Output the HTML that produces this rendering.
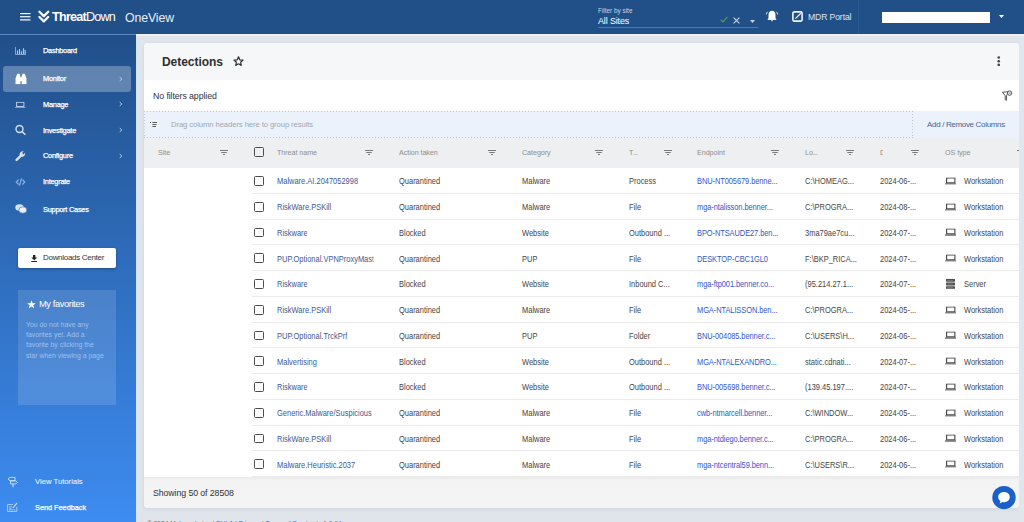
<!DOCTYPE html>
<html><head><meta charset="utf-8">
<style>
*{box-sizing:border-box;margin:0;padding:0}
html,body{width:1024px;height:522px;overflow:hidden}
body{font-family:"Liberation Sans",sans-serif;background:#dfe5eb;position:relative;color:#333}
.abs{position:absolute}
#top{position:absolute;left:0;top:0;width:1024px;height:34px;background:#214f87}
#side{position:absolute;left:0;top:34px;width:136px;height:488px;background:linear-gradient(180deg,#214f89 0%,#2f6dbd 48%,#3d8cf1 100%);border-top:1px solid #5a88c4}
.nav{position:absolute;left:0;width:136px;height:26px;color:#fff;font-size:7.4px;font-weight:normal;letter-spacing:-0.25px;-webkit-text-stroke:0.25px #fff}
.nav .t{position:absolute;left:43px;top:50%;transform:translateY(-50%);white-space:nowrap}
.nav .ic{position:absolute;left:15px;top:calc(50% + 0.8px);transform:translateY(-50%);line-height:0}
.nav .chev{position:absolute;left:119px;top:calc(50% + 0.5px);transform:translateY(-50%);line-height:0}
#card{position:absolute;left:144px;top:43px;width:875px;height:465px;background:#fff;border-radius:4px;overflow:hidden;box-shadow:0 1px 4px rgba(0,0,0,0.07)}
#chead{position:absolute;left:0;top:0;width:875px;height:36.6px;background:#f5f7f9}
.row{position:absolute;left:0;width:875px;height:25.75px}
.row::after{content:"";position:absolute;left:108px;right:0;bottom:0;height:1px;background:#ebebeb}
.c{position:absolute;top:calc(50% + 0.4px);transform:translateY(-50%) scaleX(0.87);transform-origin:0 50%;font-size:8.6px;color:#444;white-space:nowrap;letter-spacing:0;margin-left:-144px}
.link1{color:#3d5991}
.link2{color:#3157cc;letter-spacing:-0.1px}
.cb{position:absolute;top:8px;width:9.8px;height:9.8px;border:1.5px solid #4d4d4d;border-radius:1.5px;margin-left:-144px}
.os{position:absolute;top:50%;transform:translateY(-50%);margin-left:-144px;line-height:0}
.h{position:absolute;top:151.7px;transform:translateY(-50%);font-size:7.2px;color:#8e8e8e;white-space:nowrap;letter-spacing:-0.07px;margin-left:-144px}
.hf{position:absolute;top:149.9px;margin-left:-144px;line-height:0}
.fi{fill:#7a7a7a}
</style></head>
<body>
<div id="top">
  <!-- hamburger -->
  <svg class="abs" style="left:20px;top:13px" width="10.5" height="7.5" viewBox="0 0 10.5 7.5"><rect y="0" width="10.5" height="1.2" fill="#fff"/><rect y="3.15" width="10.5" height="1.2" fill="#fff"/><rect y="6.3" width="10.5" height="1.2" fill="#fff"/></svg>
  <!-- logo mark -->
  <svg class="abs" style="left:37px;top:9px" width="14" height="15" viewBox="0 0 14 15"><path d="M2.4 2.7 L6.8 7.1 L11.2 2.7" stroke="#fff" stroke-width="2.3" stroke-linecap="round" stroke-linejoin="round" fill="none"/><path d="M2.4 8 L6.8 12.4 L11.2 8" stroke="#fff" stroke-width="2.3" stroke-linecap="round" stroke-linejoin="round" fill="none"/></svg>
  <div class="abs" style="left:52px;top:10px;font-size:12.6px;color:#fff;white-space:nowrap"><b style="letter-spacing:-0.75px">Threat</b><span style="letter-spacing:-0.8px">Down</span></div>
  <div class="abs" style="left:125px;top:11px;font-size:12.3px;color:#e6eefa;letter-spacing:-0.1px;white-space:nowrap">OneView</div>

  <div class="abs" style="left:598px;top:6.7px;font-size:6.4px;color:#c9d6e8;white-space:nowrap">Filter by site</div>
  <div class="abs" style="left:598px;top:15.7px;font-size:9px;color:#fff;white-space:nowrap;letter-spacing:-0.15px">All Sites</div>
  <div class="abs" style="left:598px;top:26.5px;width:160px;height:1.3px;background:#4f77ad"></div>
  <svg class="abs" style="left:720px;top:16px" width="8" height="7" viewBox="0 0 8 7"><path d="M0.6 3.6 L3 6 L7.4 0.8" stroke="#5e9e4e" stroke-width="1.1" fill="none"/></svg>
  <svg class="abs" style="left:733px;top:16.5px" width="7" height="7" viewBox="0 0 7 7"><path d="M0.6 0.6 L6.4 6.4 M6.4 0.6 L0.6 6.4" stroke="#c8d4e6" stroke-width="1.1" fill="none"/></svg>
  <svg class="abs" style="left:750px;top:20px" width="5" height="3" viewBox="0 0 5 3"><path d="M0 0 L5 0 L2.5 3 Z" fill="#c8d4e6"/></svg>
  <!-- bell -->
  <svg class="abs" style="left:764.5px;top:9px" width="14" height="14" viewBox="0 0 14 14"><path d="M7 1.8 C4.6 1.8 3.5 3.7 3.5 5.9 L3.5 9.2 L2.4 11.1 L11.6 11.1 L10.5 9.2 L10.5 5.9 C10.5 3.7 9.4 1.8 7 1.8 Z" fill="#fff"/><rect x="6.2" y="11.1" width="1.6" height="1.1" fill="#e8eef8"/><path d="M2.6 2.8 C1.8 3.6 1.4 4.5 1.3 5.5 M11.4 2.8 C12.2 3.6 12.6 4.5 12.7 5.5" stroke="#dfe8f5" stroke-width="1" fill="none"/></svg>
  <!-- mdr icon -->
  <svg class="abs" style="left:791.5px;top:11px" width="11" height="11" viewBox="0 0 11 11"><rect x="0.9" y="0.9" width="9.2" height="9.2" rx="1.3" stroke="#f2f6fc" stroke-width="1.6" fill="none"/><path d="M3.4 7.6 L8.8 2.2" stroke="#e6edf7" stroke-width="1.3" fill="none"/></svg>
  <div class="abs" style="left:808px;top:11.5px;font-size:8.6px;color:#dde6f2;white-space:nowrap;letter-spacing:-0.1px">MDR Portal</div>
  <div class="abs" style="left:858px;top:0;width:1px;height:34px;background:#2a5991"></div>
  <div class="abs" style="left:882px;top:12px;width:108px;height:11px;background:#fff"></div>
  <svg class="abs" style="left:999px;top:15px" width="5" height="3" viewBox="0 0 5 3"><path d="M0 0 L5 0 L2.5 3 Z" fill="#fff"/></svg>
</div>

<div id="side">
  <div class="nav" style="top:2.2px"><span class="ic"><svg width="11" height="8" viewBox="0 0 11 8"><path d="M0.5 0 L0.5 7.5 L11 7.5" stroke="#9bb8e0" stroke-width="0.8" fill="none"/><path d="M2.5 7 L2.5 3.5 M4.5 7 L4.5 2 M6.5 7 L6.5 4.2 M8.5 7 L8.5 1.2 M10.2 7 L10.2 3" stroke="#a9c3e8" stroke-width="1.2"/></svg></span><span class="t">Dashboard</span></div>
  <div class="abs" style="left:2.8px;top:31.2px;width:128.2px;height:25.8px;background:rgba(255,255,255,0.28);border-radius:3px"></div>
  <div class="nav" style="top:30.1px"><span class="ic"><svg width="12" height="11.5" viewBox="0 0 12 11.5"><path d="M0.6 5 L2.2 0.8 Q2.6 0.2 3.3 0.3 L4.6 0.5 L5.3 3 L5.3 11 L0.5 11 Z" fill="#fff"/><path d="M11.4 5 L9.8 0.8 Q9.4 0.2 8.7 0.3 L7.4 0.5 L6.7 3 L6.7 11 L11.5 11 Z" fill="#fff"/><rect x="5" y="4" width="2" height="4" fill="#fff"/></svg></span><span class="t">Monitor</span><span class="chev"><svg width="3.5" height="5" viewBox="0 0 3.5 5"><path d="M0.6 0.5 L2.8 2.5 L0.6 4.5" stroke="#c9d8ee" stroke-width="0.9" fill="none"/></svg></span></div>
  <div class="nav" style="top:55.8px"><span class="ic"><svg width="10.5" height="6.5" viewBox="0 0 10.5 6.5"><rect x="1.6" y="0.5" width="7.3" height="4.3" stroke="#c7d7ee" stroke-width="0.9" fill="none"/><rect x="0" y="5.5" width="10.5" height="1" fill="#c7d7ee"/></svg></span><span class="t">Manage</span><span class="chev"><svg width="3.5" height="5" viewBox="0 0 3.5 5"><path d="M0.6 0.5 L2.8 2.5 L0.6 4.5" stroke="#c9d8ee" stroke-width="0.9" fill="none"/></svg></span></div>
  <div class="nav" style="top:81.6px"><span class="ic"><svg width="11" height="11" viewBox="0 0 11 11"><circle cx="4.5" cy="4.5" r="3.5" stroke="#d5e2f3" stroke-width="1.4" fill="none"/><path d="M7 7 L10.3 10.3" stroke="#d5e2f3" stroke-width="1.6"/></svg></span><span class="t">Investigate</span><span class="chev"><svg width="3.5" height="5" viewBox="0 0 3.5 5"><path d="M0.6 0.5 L2.8 2.5 L0.6 4.5" stroke="#c9d8ee" stroke-width="0.9" fill="none"/></svg></span></div>
  <div class="nav" style="top:107px"><span class="ic"><svg width="11" height="11" viewBox="0 0 11 11"><path d="M1.6 9.4 L5.4 5.6" stroke="#d5e2f3" stroke-width="2.4" stroke-linecap="round"/><path d="M4.6 4.8 C4.2 2.4 6.2 0.4 8.7 0.9 L7.1 2.6 L8.4 3.9 L10.1 2.3 C10.6 4.8 8.6 6.8 6.2 6.4 Z" fill="#d5e2f3"/></svg></span><span class="t">Configure</span><span class="chev"><svg width="3.5" height="5" viewBox="0 0 3.5 5"><path d="M0.6 0.5 L2.8 2.5 L0.6 4.5" stroke="#c9d8ee" stroke-width="0.9" fill="none"/></svg></span></div>
  <div class="nav" style="top:132.8px"><span class="ic"><svg width="11" height="9" viewBox="0 0 11 9"><path d="M3.6 2.2 L1.3 4.6 L3.6 7 M7.4 2.2 L9.7 4.6 L7.4 7" stroke="#8ab5ec" stroke-width="1.2" fill="none"/><path d="M6.6 0.8 L4.4 8.2" stroke="#8ab5ec" stroke-width="1.2"/></svg></span><span class="t">Integrate</span></div>
  <div class="nav" style="top:160.7px"><span class="ic"><svg width="12" height="10" viewBox="0 0 12 10"><ellipse cx="4.5" cy="3.5" rx="4.2" ry="3.2" fill="#d5e2f3"/><ellipse cx="7.8" cy="6" rx="4" ry="3.2" fill="#e8eff8" stroke="#3a6ab0" stroke-width="0.6"/></svg></span><span class="t">Support Cases</span></div>

  <div class="abs" style="left:18px;top:213.3px;width:98px;height:19.5px;background:#fff;border-radius:2px;box-shadow:0 1px 3px rgba(0,0,0,0.3)">
    <svg class="abs" style="left:13px;top:6.5px" width="6.4" height="7" viewBox="0 0 6.4 7"><path d="M2 0 L4.4 0 L4.4 2.6 L6.1 2.6 L3.2 5.3 L0.3 2.6 L2 2.6 Z" fill="#222"/><rect x="0.3" y="6" width="5.8" height="1" fill="#222"/></svg>
    <div class="abs" style="left:25px;top:5px;font-size:8px;color:#333;white-space:nowrap;letter-spacing:-0.3px">Downloads Center</div>
  </div>

  <div class="abs" style="left:18px;top:255px;width:98px;height:115px;background:rgba(255,255,255,0.13)">
    <svg class="abs" style="left:9px;top:10px" width="9" height="8.5" viewBox="0 0 10 9"><path d="M5 0 L6.2 3.3 L9.8 3.4 L7 5.6 L8 9 L5 7 L2 9 L3 5.6 L0.2 3.4 L3.8 3.3 Z" fill="#fff"/></svg>
    <div class="abs" style="left:21px;top:9px;font-size:9.3px;color:#fff;white-space:nowrap;letter-spacing:-0.4px">My favorites</div>
    <div class="abs" style="left:8px;top:30px;width:95px;font-size:6.9px;line-height:10.2px;color:#9fc0ea;white-space:nowrap">You do not have any<br>favorites yet. Add a<br>favorite by clicking the<br>star when viewing a page</div>
  </div>

  <div class="nav" style="top:433.1px;font-weight:normal"><span class="ic" style="left:7px"><svg width="11" height="11" viewBox="0 0 11 11"><path d="M1 2.6 L3 0.8 L8 0.8 L8 4.2 L3 4.2 Z" stroke="#d5e2f3" stroke-width="0.9" fill="none"/><path d="M3.5 4.4 L8.8 4.4 L10.3 5.9 L8.8 7.4 L3.5 7.4 Z" stroke="#d5e2f3" stroke-width="0.9" fill="none"/><path d="M6 7.4 L6 10.8" stroke="#d5e2f3" stroke-width="1"/></svg></span><span class="t" style="left:35px;font-size:7.7px;letter-spacing:0;color:#e6eefa;-webkit-text-stroke:0.1px #e6eefa">View Tutorials</span></div>
  <div class="nav" style="top:458.6px;"><span class="ic" style="left:7px"><svg width="10.5" height="10" viewBox="0 0 10.5 10"><path d="M6 2.5 L0.6 2.5 L0.6 9.4 L9.8 9.4 L9.8 5" stroke="#b8cdea" stroke-width="0.9" fill="none"/><path d="M2 4.8 L5 4.8 M2 6.3 L4.5 6.3 M2 7.8 L8.5 7.8" stroke="#b8cdea" stroke-width="0.8"/><path d="M5.8 6 L10 1.2" stroke="#d5e2f3" stroke-width="1.1"/></svg></span><span class="t" style="left:35px;letter-spacing:-0.05px">Send Feedback</span></div>
</div>

<div id="card">
  <div id="chead"></div>
  <div class="abs" style="left:18px;top:11.8px;font-size:12px;font-weight:bold;color:#303030;white-space:nowrap;letter-spacing:-0.05px">Detections</div>
  <svg class="abs" style="left:89.3px;top:13.3px" width="11" height="11" viewBox="0 0 11 11"><path d="M5.50 0.85 L6.81 3.79 L10.02 4.13 L7.62 6.29 L8.29 9.44 L5.50 7.83 L2.71 9.44 L3.38 6.29 L0.98 4.13 L4.19 3.79 Z" stroke="#333" stroke-width="1.2" fill="none" stroke-linejoin="round"/></svg>
  <svg class="abs" style="left:853px;top:13px" width="3.5" height="10" viewBox="0 0 3.5 10"><circle cx="1.75" cy="1.5" r="1.3" fill="#444"/><circle cx="1.75" cy="5.2" r="1.3" fill="#444"/><circle cx="1.75" cy="8.9" r="1.3" fill="#444"/></svg>

  <div class="abs" style="left:9px;top:48px;font-size:8.8px;color:#333;white-space:nowrap;letter-spacing:-0.1px">No filters applied</div>
  <svg class="abs" style="left:858px;top:47px" width="12" height="12" viewBox="0 0 12 12"><path d="M0.5 2.2 L6.2 1.8 L4.6 5.6 L4.4 10.4 L3.2 9.6 L3.2 5.8 Z" stroke="#555" stroke-width="1" fill="none" stroke-linejoin="round"/><circle cx="7.6" cy="3.1" r="2.2" stroke="#555" stroke-width="1" fill="#fff"/><path d="M6.8 2.3 L8.4 3.9 M8.4 2.3 L6.8 3.9" stroke="#666" stroke-width="0.7"/></svg>

  <div class="abs" style="left:0;top:68px;width:875px;height:26.6px;background:#ebf2fb"></div>
  <div class="abs" style="left:0;top:68px;width:768.5px;height:1px;background:repeating-linear-gradient(90deg,#bcc5d2 0 1.5px,transparent 1.5px 3px)"></div><div class="abs" style="left:0;top:93.6px;width:768.5px;height:1px;background:repeating-linear-gradient(90deg,#bcc5d2 0 1.5px,transparent 1.5px 3px)"></div><div class="abs" style="left:0;top:68px;width:1px;height:26.6px;background:repeating-linear-gradient(180deg,#c3cbd6 0 1.5px,transparent 1.5px 3px)"></div><div class="abs" style="left:767.5px;top:68px;width:1px;height:26.6px;background:repeating-linear-gradient(180deg,#bcc5d2 0 1.5px,transparent 1.5px 3px)"></div>
  <svg class="abs" style="left:6px;top:79px" width="8" height="6" viewBox="0 0 8 6"><g fill="#5a5a5a"><rect x="0" y="0" width="1" height="1"/><rect x="2" y="0" width="1" height="1" opacity="0.6"/><rect x="2" y="2" width="1" height="1" opacity="0.6"/><rect x="2" y="4" width="1" height="1" opacity="0.6"/><rect x="3" y="0" width="4" height="1"/><rect x="3" y="2" width="3.5" height="1"/><rect x="3" y="4" width="3" height="1"/></g></svg>
  <div class="abs" style="left:27px;top:76.7px;font-size:7.7px;color:#a0a8b2;white-space:nowrap;letter-spacing:-0.1px">Drag column headers here to group results</div>
  <div class="abs" style="left:783px;top:76.5px;font-size:8px;color:#4a6290;white-space:nowrap;letter-spacing:-0.33px">Add / Remove Columns</div>

  <div class="abs" style="left:0;top:94.6px;width:875px;height:30.6px;background:#eeeff1"></div>
</div>
<div id="rows" class="abs" style="left:144px;top:0;width:875px;height:522px;overflow:visible">
<div class="cb" style="left:254px;top:147px"></div>
<span class="h" style="left:158px">Site</span>
<span class="hf" style="left:220px"><svg class="fi" width="8" height="5" viewBox="0 0 8 5"><rect x="0" y="0" width="8" height="1"/><rect x="1.25" y="2" width="5.5" height="1"/><rect x="3" y="4" width="2" height="1"/></svg></span>
<span class="h" style="left:277px">Threat name</span>
<span class="hf" style="left:365px"><svg class="fi" width="8" height="5" viewBox="0 0 8 5"><rect x="0" y="0" width="8" height="1"/><rect x="1.25" y="2" width="5.5" height="1"/><rect x="3" y="4" width="2" height="1"/></svg></span>
<span class="h" style="left:399px">Action taken</span>
<span class="hf" style="left:488px"><svg class="fi" width="8" height="5" viewBox="0 0 8 5"><rect x="0" y="0" width="8" height="1"/><rect x="1.25" y="2" width="5.5" height="1"/><rect x="3" y="4" width="2" height="1"/></svg></span>
<span class="h" style="left:522px">Category</span>
<span class="hf" style="left:595px"><svg class="fi" width="8" height="5" viewBox="0 0 8 5"><rect x="0" y="0" width="8" height="1"/><rect x="1.25" y="2" width="5.5" height="1"/><rect x="3" y="4" width="2" height="1"/></svg></span>
<span class="h" style="left:629px">T<span style="letter-spacing:-0.6px">...</span></span>
<span class="hf" style="left:664px"><svg class="fi" width="8" height="5" viewBox="0 0 8 5"><rect x="0" y="0" width="8" height="1"/><rect x="1.25" y="2" width="5.5" height="1"/><rect x="3" y="4" width="2" height="1"/></svg></span>
<span class="h" style="left:697px">Endpoint</span>
<span class="hf" style="left:771px"><svg class="fi" width="8" height="5" viewBox="0 0 8 5"><rect x="0" y="0" width="8" height="1"/><rect x="1.25" y="2" width="5.5" height="1"/><rect x="3" y="4" width="2" height="1"/></svg></span>
<span class="h" style="left:805px">Lo<span style="letter-spacing:-0.6px">...</span></span>
<span class="hf" style="left:846px"><svg class="fi" width="8" height="5" viewBox="0 0 8 5"><rect x="0" y="0" width="8" height="1"/><rect x="1.25" y="2" width="5.5" height="1"/><rect x="3" y="4" width="2" height="1"/></svg></span>
<span class="h" style="left:880px"><span style="display:inline-block;width:3px;overflow:hidden;vertical-align:top">D</span></span>
<span class="hf" style="left:911px"><svg class="fi" width="8" height="5" viewBox="0 0 8 5"><rect x="0" y="0" width="8" height="1"/><rect x="1.25" y="2" width="5.5" height="1"/><rect x="3" y="4" width="2" height="1"/></svg></span>
<span class="h" style="left:945px">OS type</span>
<div class="row" style="top:168.00px">
<div class="cb" style="left:254px"></div>
<span class="c link1" style="left:277px;max-width:111px;overflow:hidden">Malware.AI.2047052998</span>
<span class="c" style="left:399px">Quarantined</span>
<span class="c" style="left:522px">Malware</span>
<span class="c" style="left:629px">Process</span>
<span class="c link2" style="left:697px">BNU-NT005679.benne...</span>
<span class="c" style="left:805px">C:\HOMEAG...</span>
<span class="c" style="left:880px">2024-06-...</span>
<span class="os" style="left:944.5px"><svg width="11.5" height="7.2" viewBox="0 0 11.5 7.2"><rect x="1.6" y="0.55" width="8.3" height="4.9" fill="none" stroke="#444" stroke-width="1.1"/><rect x="0" y="6.1" width="11.5" height="1.1" fill="#444"/></svg></span>
<span class="c" style="left:964px">Workstation</span>
</div>
<div class="row" style="top:193.75px">
<div class="cb" style="left:254px"></div>
<span class="c link1" style="left:277px;max-width:111px;overflow:hidden">RiskWare.PSKill</span>
<span class="c" style="left:399px">Quarantined</span>
<span class="c" style="left:522px">Malware</span>
<span class="c" style="left:629px">File</span>
<span class="c link2" style="left:697px">mga-ntalisson.benner...</span>
<span class="c" style="left:805px">C:\PROGRA...</span>
<span class="c" style="left:880px">2024-08-...</span>
<span class="os" style="left:944.5px"><svg width="11.5" height="7.2" viewBox="0 0 11.5 7.2"><rect x="1.6" y="0.55" width="8.3" height="4.9" fill="none" stroke="#444" stroke-width="1.1"/><rect x="0" y="6.1" width="11.5" height="1.1" fill="#444"/></svg></span>
<span class="c" style="left:964px">Workstation</span>
</div>
<div class="row" style="top:219.50px">
<div class="cb" style="left:254px"></div>
<span class="c link1" style="left:277px;max-width:111px;overflow:hidden">Riskware</span>
<span class="c" style="left:399px">Blocked</span>
<span class="c" style="left:522px">Website</span>
<span class="c" style="left:629px">Outbound ...</span>
<span class="c link2" style="left:697px">BPO-NTSAUDE27.ben...</span>
<span class="c" style="left:805px">3ma79ae7cu...</span>
<span class="c" style="left:880px">2024-07-...</span>
<span class="os" style="left:944.5px"><svg width="11.5" height="7.2" viewBox="0 0 11.5 7.2"><rect x="1.6" y="0.55" width="8.3" height="4.9" fill="none" stroke="#444" stroke-width="1.1"/><rect x="0" y="6.1" width="11.5" height="1.1" fill="#444"/></svg></span>
<span class="c" style="left:964px">Workstation</span>
</div>
<div class="row" style="top:245.25px">
<div class="cb" style="left:254px"></div>
<span class="c link1" style="left:277px;max-width:111px;overflow:hidden">PUP.Optional.VPNProxyMaster</span>
<span class="c" style="left:399px">Quarantined</span>
<span class="c" style="left:522px">PUP</span>
<span class="c" style="left:629px">File</span>
<span class="c link2" style="left:697px">DESKTOP-CBC1GL0</span>
<span class="c" style="left:805px">F:\BKP_RICA...</span>
<span class="c" style="left:880px">2024-07-...</span>
<span class="os" style="left:944.5px"><svg width="11.5" height="7.2" viewBox="0 0 11.5 7.2"><rect x="1.6" y="0.55" width="8.3" height="4.9" fill="none" stroke="#444" stroke-width="1.1"/><rect x="0" y="6.1" width="11.5" height="1.1" fill="#444"/></svg></span>
<span class="c" style="left:964px">Workstation</span>
</div>
<div class="row" style="top:271.00px">
<div class="cb" style="left:254px"></div>
<span class="c link1" style="left:277px;max-width:111px;overflow:hidden">Riskware</span>
<span class="c" style="left:399px">Blocked</span>
<span class="c" style="left:522px">Website</span>
<span class="c" style="left:629px">Inbound C...</span>
<span class="c link2" style="left:697px">mga-ftp001.benner.co...</span>
<span class="c" style="left:805px">(95.214.27.1...</span>
<span class="c" style="left:880px">2024-07-...</span>
<span class="os" style="left:946px"><svg width="9" height="10.5" viewBox="0 0 9 10.5"><rect x="0" y="0" width="9" height="3" rx="0.8" fill="#4a4a4a"/><rect x="0" y="3.75" width="9" height="3" rx="0.8" fill="#4a4a4a"/><rect x="0" y="7.5" width="9" height="3" rx="0.8" fill="#4a4a4a"/><rect x="1" y="1.2" width="6" height="0.6" fill="#999"/><rect x="1" y="4.95" width="6" height="0.6" fill="#999"/><rect x="1" y="8.7" width="6" height="0.6" fill="#999"/></svg></span>
<span class="c" style="left:964px">Server</span>
</div>
<div class="row" style="top:296.75px">
<div class="cb" style="left:254px"></div>
<span class="c link1" style="left:277px;max-width:111px;overflow:hidden">RiskWare.PSKill</span>
<span class="c" style="left:399px">Quarantined</span>
<span class="c" style="left:522px">Malware</span>
<span class="c" style="left:629px">File</span>
<span class="c link2" style="left:697px">MGA-NTALISSON.ben...</span>
<span class="c" style="left:805px">C:\PROGRA...</span>
<span class="c" style="left:880px">2024-05-...</span>
<span class="os" style="left:944.5px"><svg width="11.5" height="7.2" viewBox="0 0 11.5 7.2"><rect x="1.6" y="0.55" width="8.3" height="4.9" fill="none" stroke="#444" stroke-width="1.1"/><rect x="0" y="6.1" width="11.5" height="1.1" fill="#444"/></svg></span>
<span class="c" style="left:964px">Workstation</span>
</div>
<div class="row" style="top:322.50px">
<div class="cb" style="left:254px"></div>
<span class="c link1" style="left:277px;max-width:111px;overflow:hidden">PUP.Optional.TrckPrf</span>
<span class="c" style="left:399px">Quarantined</span>
<span class="c" style="left:522px">PUP</span>
<span class="c" style="left:629px">Folder</span>
<span class="c link2" style="left:697px">BNU-004085.benner.c...</span>
<span class="c" style="left:805px">C:\USERS\H...</span>
<span class="c" style="left:880px">2024-06-...</span>
<span class="os" style="left:944.5px"><svg width="11.5" height="7.2" viewBox="0 0 11.5 7.2"><rect x="1.6" y="0.55" width="8.3" height="4.9" fill="none" stroke="#444" stroke-width="1.1"/><rect x="0" y="6.1" width="11.5" height="1.1" fill="#444"/></svg></span>
<span class="c" style="left:964px">Workstation</span>
</div>
<div class="row" style="top:348.25px">
<div class="cb" style="left:254px"></div>
<span class="c link1" style="left:277px;max-width:111px;overflow:hidden">Malvertising</span>
<span class="c" style="left:399px">Blocked</span>
<span class="c" style="left:522px">Website</span>
<span class="c" style="left:629px">Outbound ...</span>
<span class="c link2" style="left:697px">MGA-NTALEXANDRO...</span>
<span class="c" style="left:805px">static.cdnati...</span>
<span class="c" style="left:880px">2024-07-...</span>
<span class="os" style="left:944.5px"><svg width="11.5" height="7.2" viewBox="0 0 11.5 7.2"><rect x="1.6" y="0.55" width="8.3" height="4.9" fill="none" stroke="#444" stroke-width="1.1"/><rect x="0" y="6.1" width="11.5" height="1.1" fill="#444"/></svg></span>
<span class="c" style="left:964px">Workstation</span>
</div>
<div class="row" style="top:374.00px">
<div class="cb" style="left:254px"></div>
<span class="c link1" style="left:277px;max-width:111px;overflow:hidden">Riskware</span>
<span class="c" style="left:399px">Blocked</span>
<span class="c" style="left:522px">Website</span>
<span class="c" style="left:629px">Outbound ...</span>
<span class="c link2" style="left:697px">BNU-005698.benner.c...</span>
<span class="c" style="left:805px">(139.45.197....</span>
<span class="c" style="left:880px">2024-07-...</span>
<span class="os" style="left:944.5px"><svg width="11.5" height="7.2" viewBox="0 0 11.5 7.2"><rect x="1.6" y="0.55" width="8.3" height="4.9" fill="none" stroke="#444" stroke-width="1.1"/><rect x="0" y="6.1" width="11.5" height="1.1" fill="#444"/></svg></span>
<span class="c" style="left:964px">Workstation</span>
</div>
<div class="row" style="top:399.75px">
<div class="cb" style="left:254px"></div>
<span class="c link1" style="left:277px;max-width:111px;overflow:hidden">Generic.Malware/Suspicious</span>
<span class="c" style="left:399px">Quarantined</span>
<span class="c" style="left:522px">Malware</span>
<span class="c" style="left:629px">File</span>
<span class="c link2" style="left:697px">cwb-ntmarcell.benner...</span>
<span class="c" style="left:805px">C:\WINDOW...</span>
<span class="c" style="left:880px">2024-05-...</span>
<span class="os" style="left:944.5px"><svg width="11.5" height="7.2" viewBox="0 0 11.5 7.2"><rect x="1.6" y="0.55" width="8.3" height="4.9" fill="none" stroke="#444" stroke-width="1.1"/><rect x="0" y="6.1" width="11.5" height="1.1" fill="#444"/></svg></span>
<span class="c" style="left:964px">Workstation</span>
</div>
<div class="row" style="top:425.50px">
<div class="cb" style="left:254px"></div>
<span class="c link1" style="left:277px;max-width:111px;overflow:hidden">RiskWare.PSKill</span>
<span class="c" style="left:399px">Quarantined</span>
<span class="c" style="left:522px">Malware</span>
<span class="c" style="left:629px">File</span>
<span class="c link2" style="left:697px">mga-ntdiego.benner.c...</span>
<span class="c" style="left:805px">C:\PROGRA...</span>
<span class="c" style="left:880px">2024-06-...</span>
<span class="os" style="left:944.5px"><svg width="11.5" height="7.2" viewBox="0 0 11.5 7.2"><rect x="1.6" y="0.55" width="8.3" height="4.9" fill="none" stroke="#444" stroke-width="1.1"/><rect x="0" y="6.1" width="11.5" height="1.1" fill="#444"/></svg></span>
<span class="c" style="left:964px">Workstation</span>
</div>
<div class="row" style="top:451.25px">
<div class="cb" style="left:254px"></div>
<span class="c link1" style="left:277px;max-width:111px;overflow:hidden">Malware.Heuristic.2037</span>
<span class="c" style="left:399px">Quarantined</span>
<span class="c" style="left:522px">Malware</span>
<span class="c" style="left:629px">File</span>
<span class="c link2" style="left:697px">mga-ntcentral59.benn...</span>
<span class="c" style="left:805px">C:\USERS\R...</span>
<span class="c" style="left:880px">2024-06-...</span>
<span class="os" style="left:944.5px"><svg width="11.5" height="7.2" viewBox="0 0 11.5 7.2"><rect x="1.6" y="0.55" width="8.3" height="4.9" fill="none" stroke="#444" stroke-width="1.1"/><rect x="0" y="6.1" width="11.5" height="1.1" fill="#444"/></svg></span>
<span class="c" style="left:964px">Workstation</span>
</div>
</div>
<div class="abs" style="left:144px;top:477px;width:875px;height:31px;background:linear-gradient(180deg,#e8e8e8 0,#f3f3f3 3px,#f4f4f4 100%);border-radius:0 0 4px 4px"></div>
<div class="abs" style="left:153px;top:487.5px;font-size:8.8px;color:#333;white-space:nowrap;letter-spacing:-0.1px">Showing 50 of 28508</div>
<div class="abs" style="left:147px;top:520px;font-size:6.6px;color:#666;white-space:nowrap">© 2024 Malwarebytes | <span style="color:#3b62b0">EULA</span> | <span style="color:#3b62b0">Privacy</span> | <span style="color:#3b62b0">Terms of Service</span> | v1.0.64</div>
<div class="abs" style="left:1019px;top:34px;width:5px;height:488px;background:#dfe6ee"></div>
<div class="abs" style="left:1017.3px;top:149.6px;width:1.4px;height:1.4px;border-radius:50%;background:#666"></div>
<div class="abs" style="left:136px;top:34px;width:1px;height:488px;background:#d3e4f9"></div>
<div class="abs" style="left:136px;top:34px;width:888px;height:1.5px;background:#edf1f5"></div>
<svg class="abs" style="left:990.6px;top:485px" width="26" height="26" viewBox="0 0 26 26"><circle cx="13" cy="12.6" r="11.7" fill="#1a5fca"/><path d="M13 7 C9.6 7 7.2 9.3 7.2 12.1 C7.2 13.9 8.1 15.3 9.5 16.2 L8.6 18.5 L11.6 17.1 C12.1 17.2 12.5 17.3 13 17.3 C16.4 17.3 18.8 15 18.8 12.1 C18.8 9.3 16.4 7 13 7 Z" fill="#fff"/></svg>
</body></html>
